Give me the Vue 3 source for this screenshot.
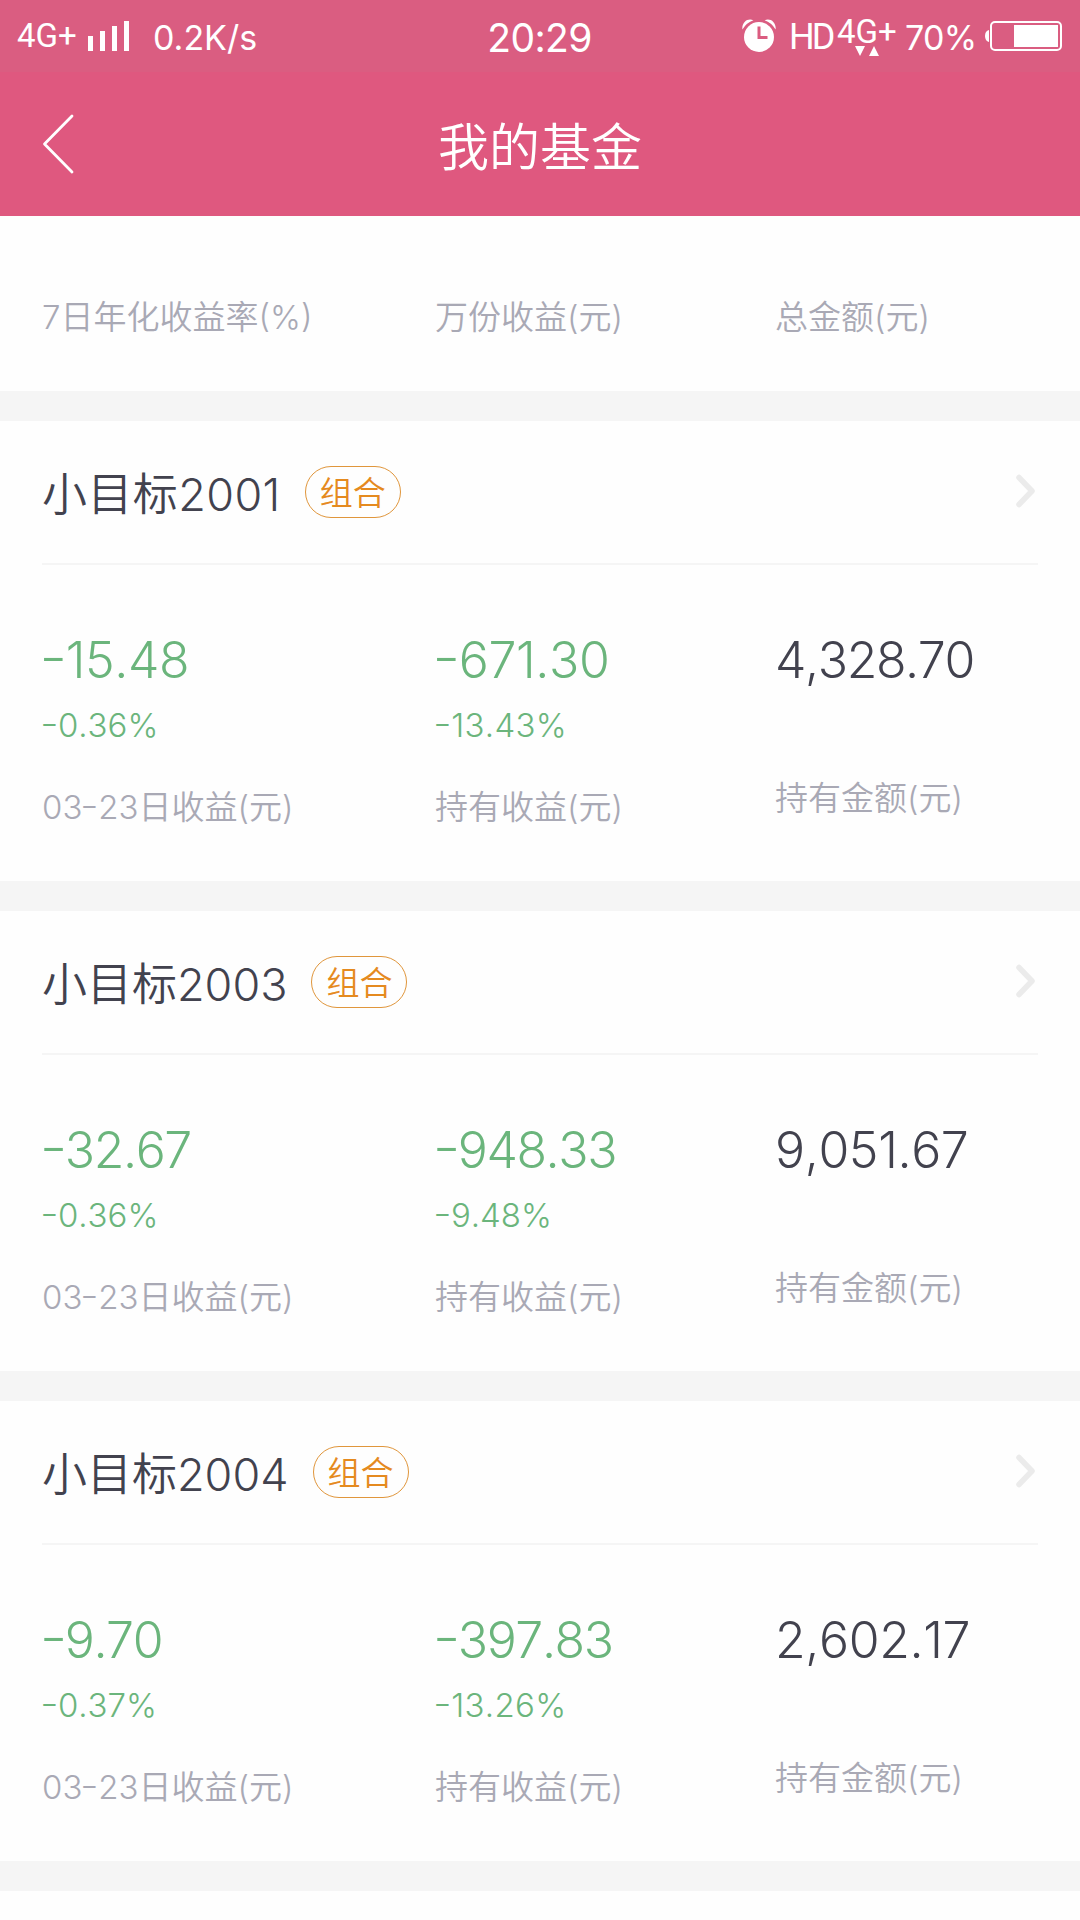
<template>
  <div class="page">
    <header class="header">
      <div class="status-bar">
        <div class="status-left">
          <span class="network">4G+</span>
          <svg class="signal" width="42" height="30" viewBox="0 0 42 30">
            <path d="M0 15h5v15H0zM12 10h5v20h-5zM24 5h5v25h-5zM36 0h5v30h-5z" fill="#fff" />
          </svg>
          <span class="speed">0.2K/s</span>
        </div>
        <span class="clock">20:29</span>
        <div class="status-right">
          <svg class="alarm" width="34" height="34" viewBox="0 0 34 34">
            <circle cx="17" cy="18" r="15" fill="#fff" />
            <path d="M.4 10.500C-.5 3 6 -1.500 11.400 1.200Q4.500 3.500 .4 10.500zM33.600 10.500C34.500 3 28 -1.500 22.600 1.200Q29.500 3.500 33.600 10.500z" fill="#fff" />
            <path d="M17 7.500V18.500H25.500" fill="none" stroke="#db5c80" stroke-width="3" />
          </svg>
          <span class="hd">HD</span>
          <div class="data">
            <span class="network">4G+</span>
            <svg class="arrows" width="24" height="10" viewBox="0 0 24 10">
              <path d="M0 0h10L5 10zM14 10h10L19 0z" fill="#fff" />
            </svg>
          </div>
          <span class="percent">70%</span>
          <svg class="battery" width="77" height="30" viewBox="0 0 77 30">
            <path d="M4 9v12Q0 20 0 15T4 9z" fill="#fff" />
            <rect x="6" y="1" width="70" height="28" rx="4" fill="none" stroke="#fff" stroke-width="2" />
            <path d="M29 4h44v22H29z" fill="#fff" />
          </svg>
        </div>
      </div>
      <div class="nav-bar">
        <svg class="back" width="32" height="60" viewBox="0 0 32 60">
          <path d="M30 2L2.500 30L30 58" fill="none" stroke="#fff" stroke-width="2.800" stroke-linecap="round" stroke-linejoin="round" />
        </svg>
        <h1 class="title">我的基金</h1>
      </div>
    </header>

    <section class="summary columns">
      <span class="label">7日年化收益率(%)</span>
      <span class="label">万份收益(元)</span>
      <span class="label">总金额(元)</span>
    </section>

    <section v-for="fund in funds" :key="fund.name" class="card">
      <div class="card-head">
        <span class="name" :class="{ loose: hasOne(fund.name) }">{{ fund.name }}</span>
        <span class="badge">组合</span>
        <svg class="arrow" width="20" height="34" viewBox="0 0 20 34">
          <path d="M3 3.500L16 17L3 30.500" fill="none" stroke="#ebebeb" stroke-width="5.500" stroke-linecap="round" stroke-linejoin="round" />
        </svg>
      </div>
      <div class="columns">
        <div class="cell down">
          <span class="amount" :class="{ loose: hasOne(fund.dayProfit) }"><span class="minus">-</span>{{ fund.dayProfit }}</span>
          <span class="rate" :class="{ loose: hasOne(fund.dayRate) }"><span class="minus">-</span>{{ fund.dayRate }}</span>
          <span class="label">03<span class="minus">-</span>23日收益(元)</span>
        </div>
        <div class="cell down">
          <span class="amount" :class="{ loose: hasOne(fund.holdProfit) }"><span class="minus">-</span>{{ fund.holdProfit }}</span>
          <span class="rate" :class="{ loose: hasOne(fund.holdRate) }"><span class="minus">-</span>{{ fund.holdRate }}</span>
          <span class="label">持有收益(元)</span>
        </div>
        <div class="cell total">
          <span class="amount" :class="{ loose: hasOne(fund.total) }">{{ fund.total }}</span>
          <span class="label">持有金额(元)</span>
        </div>
      </div>
    </section>
  </div>
</template>

<script setup>
// Losses are stored without their sign, the template draws the minus
const funds = [
  {
    name: '小目标2001',
    dayProfit: '15.48',
    dayRate: '0.36%',
    holdProfit: '671.30',
    holdRate: '13.43%',
    total: '4,328.70',
  },
  {
    name: '小目标2003',
    dayProfit: '32.67',
    dayRate: '0.36%',
    holdProfit: '948.33',
    holdRate: '9.48%',
    total: '9,051.67',
  },
  {
    name: '小目标2004',
    dayProfit: '9.70',
    dayRate: '0.37%',
    holdProfit: '397.83',
    holdRate: '13.26%',
    total: '2,602.17',
  },
];

function hasOne(text) {
  return text.includes('1');
}
</script>

<style>
body {
  background: #fefefe;
}
</style>

<style scoped>
.page {
  width: 1080px;
  height: 1920px;
  overflow: hidden;
  background: #fefefe;
  font-family: Inter, 'Noto Sans CJK SC', sans-serif;
  font-weight: 350;
  color: #42424e;
  white-space: nowrap;
}

.header {
  height: 216px;
  background: #df587f;
  color: #fff;
}

.status-bar {
  display: grid;
  grid-template-columns: 1fr auto 1fr;
  height: 72px;
  padding: 0 18px 0 17px;
  background: #da5d81;
  font-weight: 400;
}

.status-left,
.status-right {
  display: flex;
  align-items: flex-start;
}

.status-right {
  justify-content: flex-end;
}

.network {
  font-family: Roboto, sans-serif;
  font-size: 33px;
  line-height: 38px;
}

.status-left .network {
  width: 71px;
  margin-top: 17px;
}

.signal {
  margin-top: 21px;
}

.speed {
  margin: 18px 0 0 23px;
  font-size: 34px;
  line-height: 40px;
}

.clock {
  font-size: 39px;
  line-height: 76px;
  letter-spacing: -0.6px;
}

.alarm {
  margin: 19px 13px 0 0;
}

.hd {
  width: 48px;
  margin-top: 17px;
  font-family: Roboto, sans-serif;
  font-size: 36px;
  line-height: 40px;
  letter-spacing: -3px;
}

.data {
  display: flex;
  flex-direction: column;
  width: 68px;
  margin-top: 13px;
}

.arrows {
  margin: -5px 0 0 18px;
}

.percent {
  width: 80px;
  margin-top: 18px;
  font-size: 34px;
  line-height: 40px;
  letter-spacing: -0.7px;
}

.battery {
  margin-top: 21px;
}

.nav-bar {
  display: grid;
  grid-template-columns: 1fr auto 1fr;
  align-items: center;
  height: 144px;
  padding: 0 42px;
}

.title {
  margin: 0;
  padding-top: 8px;
  font-size: 51px;
  line-height: 60px;
  font-weight: 350;
}

.columns {
  display: grid;
  grid-template-columns: 393px 340px 1fr;
  padding-left: 42px;
}

.summary {
  height: 175px;
  box-sizing: border-box;
  padding-top: 81px;
}

.label {
  font-size: 33px;
  line-height: 40px;
  color: #a9a9b5;
}

.card {
  height: 460px;
  border-top: 30px solid #f5f5f5;
}

.card:last-child {
  border-bottom: 30px solid #f5f5f5;
}

.card-head {
  display: flex;
  align-items: center;
  height: 142px;
  margin: 0 42px;
  border-bottom: 2px solid #f5f5f5;
}

.name {
  padding-top: 5px;
  font-size: 45px;
  line-height: 60px;
  font-kerning: none;
}

.name.loose {
  letter-spacing: 0.4px;
}

.badge {
  box-sizing: border-box;
  width: 96px;
  height: 52px;
  margin-left: 24px;
  border: 1px solid #e0963c;
  border-radius: 26px;
  font-size: 33px;
  line-height: 52px;
  text-align: center;
  color: #e58a1f;
}

.arrow {
  margin: 0 2px 2px auto;
}

.cell {
  display: flex;
  flex-direction: column;
  padding-top: 65px;
}

.amount {
  font-size: 50px;
  line-height: 60px;
  letter-spacing: -1.4px;
  font-kerning: none;
}

.amount.loose {
  letter-spacing: -0.4px;
}

.rate {
  margin-top: 15px;
  font-size: 33px;
  line-height: 40px;
  font-kerning: none;
}

.rate.loose {
  letter-spacing: 0.3px;
}

/* longer and higher than the plain hyphen */
.minus {
  display: inline-block;
  margin-right: 0.03em;
  transform: translateY(-0.06em) scaleX(1.22);
}

.down .amount,
.down .rate {
  color: #6bb57c;
}

.cell .label {
  margin-top: 42px;
}

.total .label {
  margin-top: 88px;
}
</style>
